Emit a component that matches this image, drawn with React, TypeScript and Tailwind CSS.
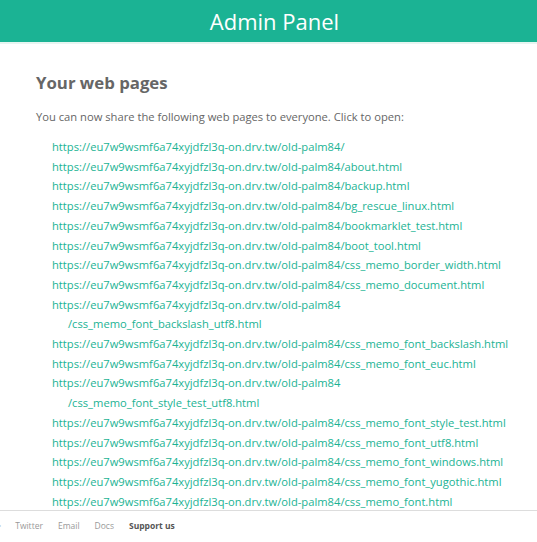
import React from "react";

const base = "https://eu7w9wsmf6a74xyjdfzl3q-on.drv.tw/old-palm84";

const pages: string[] = [
  "/",
  "/about.html",
  "/backup.html",
  "/bg_rescue_linux.html",
  "/bookmarklet_test.html",
  "/boot_tool.html",
  "/css_memo_border_width.html",
  "/css_memo_document.html",
  "/css_memo_font_backslash_utf8.html",
  "/css_memo_font_backslash.html",
  "/css_memo_font_euc.html",
  "/css_memo_font_style_test_utf8.html",
  "/css_memo_font_style_test.html",
  "/css_memo_font_utf8.html",
  "/css_memo_font_windows.html",
  "/css_memo_font_yugothic.html",
  "/css_memo_font.html",
];

export default function App() {
  return (
    <div
      className="flex h-[542px] w-full flex-col overflow-hidden bg-white"
      style={{ fontFamily: '"Open Sans", "Liberation Sans", sans-serif' }}
    >
      {/* Header */}
      <header className="flex h-[44px] shrink-0 items-center justify-center border-b-2 border-[#e6f5f1] bg-[#1bb394] pl-3">
        <h1 className="text-[22px] leading-none text-white">Admin Panel</h1>
      </header>

      {/* Content */}
      <main className="flex-1 overflow-hidden pl-9 pr-[17px]">
        <h2 className="mt-[27px] text-[16.8px] font-bold leading-6 text-[#666]">
          Your web pages
        </h2>
        <p className="mt-[12px] text-[11.2px] leading-5 text-[#666]">
          You can now share the following web pages to everyone. Click to open:
        </p>
        <ul className="mt-[10px]">
          {pages.map((p) => (
            <li key={p} className="pl-8 -indent-4 text-[11.2px] leading-[19.7px]">
              <a href="#" className="text-[#1bb394]">
                {base}
                <wbr />
                {p}
              </a>
            </li>
          ))}
        </ul>
      </main>

      {/* Footer */}
      <footer className="flex h-[32px] shrink-0 items-center gap-[14px] border-t border-[#ddd] bg-white text-[8.5px] text-[#999]">
        <span className="-ml-[2px] text-[#bbb]">•</span>
        <a href="#">Twitter</a>
        <a href="#" className="ml-px">Email</a>
        <a href="#" className="ml-px">Docs</a>
        <a href="#" className="ml-px font-bold text-[#555]">
          Support us
        </a>
      </footer>
    </div>
  );
}
